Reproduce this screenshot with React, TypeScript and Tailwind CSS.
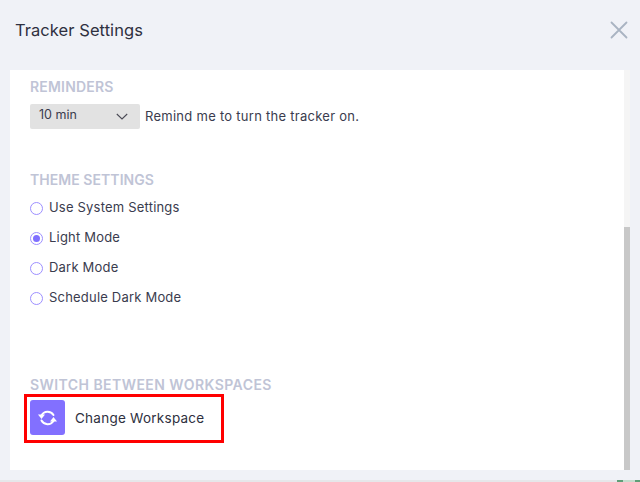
export default function App() {
  const radios = [
    { label: "Use System Settings", on: false },
    { label: "Light Mode", on: true },
    { label: "Dark Mode", on: false },
    { label: "Schedule Dark Mode", on: false },
  ];
  const font = { fontFamily: "Inter, 'Noto Sans', sans-serif" };
  return (
    <div style={font} className="w-[640px] h-[482px] overflow-hidden bg-[#f0f2f7] flex flex-col">
      <header className="h-[70px] shrink-0 flex items-center justify-between pl-[15px] pr-[12px] pb-[10px]">
        <h1 className="text-[16.5px] leading-[24px] tracking-[0.06px] font-normal text-[#2e3040]">Tracker Settings</h1>
        <svg width="18" height="18" viewBox="0 0 18 18" fill="none" stroke="#a9b4c2" strokeWidth="1.8" strokeLinecap="round">
          <path d="M1.5 1.5 16.5 16.5M16.5 1.5 1.5 16.5" />
        </svg>
      </header>
      <div className="h-[400px] shrink-0 ml-[10px] w-[620px] flex">
        <main className="flex-1 bg-white pl-[20px] flex flex-col">
          <h2 className="mt-[8px] h-[18px] leading-[18px] text-[14px] tracking-[0.2px] font-semibold text-[#c0c4d6]">REMINDERS</h2>
          <div className="mt-[8px] flex items-center gap-[5px]">
            <div className="w-[110px] h-[25px] rounded-[2px] bg-[#e2e2e2] pl-[9px] pr-[12px] flex items-center justify-between text-[12.5px] text-[#3a3c4e]">
              <span className="-mt-[2px]">10 min</span>
              <svg width="12" height="7" viewBox="0 0 12 7" fill="none" stroke="#4a4a55" strokeWidth="1.1">
                <path d="M.8 1 6 6 11.2 1" />
              </svg>
            </div>
            <span className="text-[13px] tracking-[0.27px] text-[#3a3c4e]">Remind me to turn the tracker on.</span>
          </div>
          <h2 className="mt-[42px] h-[18px] leading-[18px] text-[14px] tracking-[0.05px] font-semibold text-[#c0c4d6]">THEME SETTINGS</h2>
          <ul className="mt-[9px] flex flex-col gap-[10px]">
            {radios.map((r) => (
              <li key={r.label} className="h-[20px] flex items-center gap-[6px] text-[13px] tracking-[0.2px] text-[#3a3c4e]">
                <span className="shrink-0 w-[13px] h-[13px] rounded-full border border-[#9d8fff] bg-white flex items-center justify-center">
                  {r.on && <span className="w-[7px] h-[7px] rounded-full bg-[#7f6fff]" />}
                </span>
                {r.label}
              </li>
            ))}
          </ul>
          <h2 className="mt-[68px] h-[18px] leading-[18px] text-[14px] tracking-[0.44px] font-semibold text-[#c0c4d6]">SWITCH BETWEEN WORKSPACES</h2>
          <div className="-ml-[6px] w-[200px] h-[49px] border-[3px] border-[#ff0000] pl-[3px] pb-[2px] flex items-center gap-[10px]">
            <span className="shrink-0 w-[35px] h-[35px] rounded-[3px] bg-[#8270ff] flex items-center justify-center">
              <svg width="19" height="16" viewBox="0 0 19 16">
                <path d="M15.5 5A7 7 0 0 0 3.5 5.5" fill="none" stroke="#ffffff" strokeWidth="2" strokeLinecap="round" />
                <path d="M3.5 10.5A7 7 0 0 0 15.5 11" fill="none" stroke="#ffffff" strokeWidth="2" strokeLinecap="round" />
                <path d="M0 4.5h7L3.5 9Z" fill="#ffffff" />
                <path d="M12 11.5h7L15.5 7Z" fill="#ffffff" />
              </svg>
            </span>
            <span className="text-[13.5px] tracking-[0.25px] text-[#2e3040] mt-[2px]">Change Workspace</span>
          </div>
        </main>
        <div className="w-[6px] bg-[#f5f5f5] flex flex-col">
          <div className="mt-[157px] flex-1 bg-[#c8c8c8]" />
        </div>
      </div>
      <div className="mt-[10px] h-[2px] flex bg-[#e6e7ea]">
        <div className="ml-auto w-[6px] bg-[#5f9e78]" />
        <div className="w-[12px] bg-[#c5dccd]" />
        <div className="w-[5px] bg-[#5f9e78]" />
      </div>
    </div>
  );
}
